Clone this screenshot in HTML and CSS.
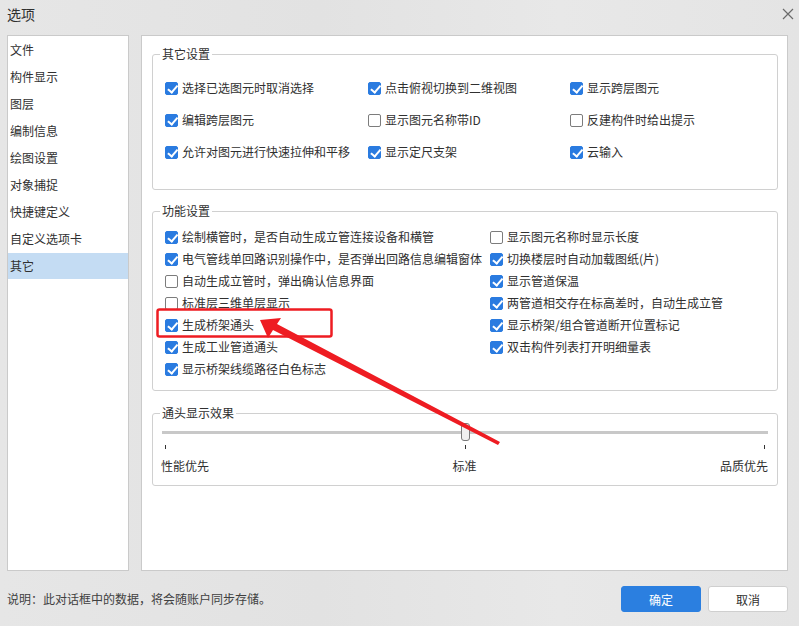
FILE: index.html
```html
<!DOCTYPE html>
<html lang="zh-CN">
<head>
    <meta charset="UTF-8" />
    <title>选项</title>
    <link rel="stylesheet" href="styles.css">
</head>
<body>
    <div class="titlebar">
        <span class="title">选项</span>
        <svg class="close" width="12" height="12" viewBox="0 0 12 12">
            <path d="M1 1L11 11M11 1L1 11" stroke="#6a6a6a" stroke-width="1.2" fill="none" />
        </svg>
    </div>

    <div class="body">
        <ul class="sidebar">
            <li>文件</li>
            <li>构件显示</li>
            <li>图层</li>
            <li>编制信息</li>
            <li>绘图设置</li>
            <li>对象捕捉</li>
            <li>快捷键定义</li>
            <li>自定义选项卡</li>
            <li class="active">其它</li>
        </ul>

        <div class="main">
            <fieldset class="group group-other">
                <legend>其它设置</legend>
                <div class="opts opts-3">
                    <label class="opt"><span class="box on"></span>选择已选图元时取消选择</label>
                    <label class="opt"><span class="box on"></span>点击俯视切换到二维视图</label>
                    <label class="opt"><span class="box on"></span>显示跨层图元</label>
                    <label class="opt"><span class="box on"></span>编辑跨层图元</label>
                    <label class="opt"><span class="box"></span>显示图元名称带ID</label>
                    <label class="opt"><span class="box"></span>反建构件时给出提示</label>
                    <label class="opt"><span class="box on"></span>允许对图元进行快速拉伸和平移</label>
                    <label class="opt"><span class="box on"></span>显示定尺支架</label>
                    <label class="opt"><span class="box on"></span>云输入</label>
                </div>
            </fieldset>

            <fieldset class="group group-func">
                <legend>功能设置</legend>
                <div class="opts opts-2">
                    <label class="opt"><span class="box on"></span>绘制横管时，是否自动生成立管连接设备和横管</label>
                    <label class="opt"><span class="box on"></span>电气管线单回路识别操作中，是否弹出回路信息编辑窗体</label>
                    <label class="opt"><span class="box"></span>自动生成立管时，弹出确认信息界面</label>
                    <label class="opt"><span class="box"></span>标准层三维单层显示</label>
                    <label class="opt"><span class="box on"></span>生成桥架通头</label>
                    <label class="opt"><span class="box on"></span>生成工业管道通头</label>
                    <label class="opt"><span class="box on"></span>显示桥架线缆路径白色标志</label>
                    <label class="opt"><span class="box"></span>显示图元名称时显示长度</label>
                    <label class="opt"><span class="box on"></span>切换楼层时自动加载图纸(片)</label>
                    <label class="opt"><span class="box on"></span>显示管道保温</label>
                    <label class="opt"><span class="box on"></span>两管道相交存在标高差时，自动生成立管</label>
                    <label class="opt"><span class="box on"></span>显示桥架/组合管道断开位置标记</label>
                    <label class="opt"><span class="box on"></span>双击构件列表打开明细量表</label>
                </div>
            </fieldset>

            <fieldset class="group group-slider">
                <legend>通头显示效果</legend>
                <div class="slider">
                    <div class="track"></div>
                    <div class="thumb"></div>
                </div>
                <div class="ticks">
                    <span></span><span></span><span></span>
                </div>
                <div class="tick-labels">
                    <span>性能优先</span>
                    <span>标准</span>
                    <span>品质优先</span>
                </div>
            </fieldset>
        </div>
    </div>

    <div class="footer">
        <span class="note">说明：此对话框中的数据，将会随账户同步存储。</span>
        <div class="buttons">
            <button class="btn btn-primary">确定</button>
            <button class="btn">取消</button>
        </div>
    </div>

    <!-- 标注 -->
    <svg class="markup" width="799" height="626" viewBox="0 0 799 626">
        <rect x="157.5" y="309.5" width="174" height="27" rx="2" fill="none" stroke="#ee1c22" stroke-width="2.5" />
        <polygon points="260,320 281,318 277,324 500,442 498,445 273,330 268,338" fill="#ee1c22" />
    </svg>
</body>
</html>
```

FILE: styles.css
```css
* {
    box-sizing: border-box;
}

body {
    margin: 0;
    width: 799px;
    height: 626px;
    font-family: "Noto Sans CJK SC", "Noto Sans", sans-serif;
    font-size: 12px;
    line-height: 16px;
    color: #303030;
    background: linear-gradient(90deg, #e6e6e6 0%, #e2e2e2 40%, #e8e8e8 70%, #e4e4e4 100%);
    overflow: hidden;
}

.titlebar {
    height: 35px;
    padding: 5px 11px 0 7px;
    display: flex;
    justify-content: space-between;
    align-items: flex-start;
}

.title {
    font-size: 14px;
    line-height: 18px;
}

.close {
    margin-top: 3px;
    margin-right: -6px;
}

.body {
    height: 536px;
    display: flex;
    gap: 12px;
    padding: 0 11px 0 7px;
}

.sidebar {
    width: 122px;
    margin: 0;
    padding: 0;
    list-style: none;
    background-color: #fff;
    border: 1px solid #cacaca;
}

.sidebar li {
    height: 27px;
    line-height: 27px;
    padding-left: 2px;
}

.sidebar li.active {
    background-color: #c4dcf3;
    height: 26px;
    margin-top: 1px;
    line-height: 25px;
}

.main {
    flex: 1;
    background-color: #fff;
    border: 1px solid #cacaca;
    padding: 10px 9px 0 10px;
}

.group {
    margin: 0;
    padding: 0 9px;
    border: 1px solid #d0d0d0;
    border-radius: 3px;
    min-width: 0;
}

.group legend {
    padding: 0 2px;
    margin-left: -2px;
    line-height: 16px;
}

.group-other {
    padding-top: 10px;
    padding-bottom: 21px;
}

.group-func {
    margin-top: 13px;
    padding-top: 7px;
    padding-bottom: 10px;
}

.group-slider {
    margin-top: 14px;
    padding-top: 2px;
    padding-bottom: 11px;
}

.opts {
    display: grid;
    align-items: center;
    padding-left: 3px;
}

.opts-3 {
    grid-template-columns: 203px 202px auto;
    grid-auto-rows: 32px;
}

.opts-2 {
    grid-template-columns: 325px auto;
    grid-template-rows: repeat(7, 22px);
    grid-auto-flow: column;
}

.opt {
    display: flex;
    align-items: center;
    white-space: nowrap;
}

.box {
    position: relative;
    flex: none;
    width: 13px;
    height: 13px;
    margin-right: 4px;
    border: 1px solid #7c7c7c;
    border-radius: 2px;
    background-color: #fff;
}

.box.on {
    border-color: #2a7be0;
    background-color: #2a7be0;
}

.box.on::after {
    content: "";
    position: absolute;
    left: 3.5px;
    top: 0.5px;
    width: 3.5px;
    height: 7.5px;
    border: solid #fff;
    border-width: 0 2px 2px 0;
    transform: rotate(40deg);
}

.slider {
    position: relative;
    height: 18px;
}

.track {
    position: absolute;
    left: 0;
    right: 0;
    top: 8px;
    height: 3px;
    background-color: #c8c8c8;
}

.thumb {
    position: absolute;
    left: 299px;
    top: 0;
    width: 9px;
    height: 18px;
    border: 1px solid #7a7a7a;
    border-radius: 3px;
    background-color: #f0f0f0;
}

.ticks {
    display: flex;
    justify-content: space-between;
    margin-top: 4px;
    padding: 0 3px 0 3px;
    height: 4px;
}

.ticks span {
    width: 1px;
    height: 4px;
    background-color: #333;
}

.tick-labels {
    display: flex;
    justify-content: space-between;
    margin-top: 9px;
    margin-left: -1px;
}

.footer {
    height: 55px;
    display: flex;
    align-items: center;
    justify-content: space-between;
    padding: 1px 11px 0 7px;
}

.note {
    color: #404040;
}

.buttons {
    display: flex;
    gap: 7px;
}

.btn {
    width: 80px;
    height: 26px;
    padding: 0;
    font-family: inherit;
    font-size: 12px;
    color: #303030;
    background-color: #fff;
    border: 1px solid #cfcfcf;
    border-radius: 3px;
}

.btn-primary {
    color: #fff;
    background-color: #2b7fe0;
    border-color: #2b7fe0;
}

.markup {
    position: absolute;
    top: 0;
    left: 0;
    pointer-events: none;
}
```
